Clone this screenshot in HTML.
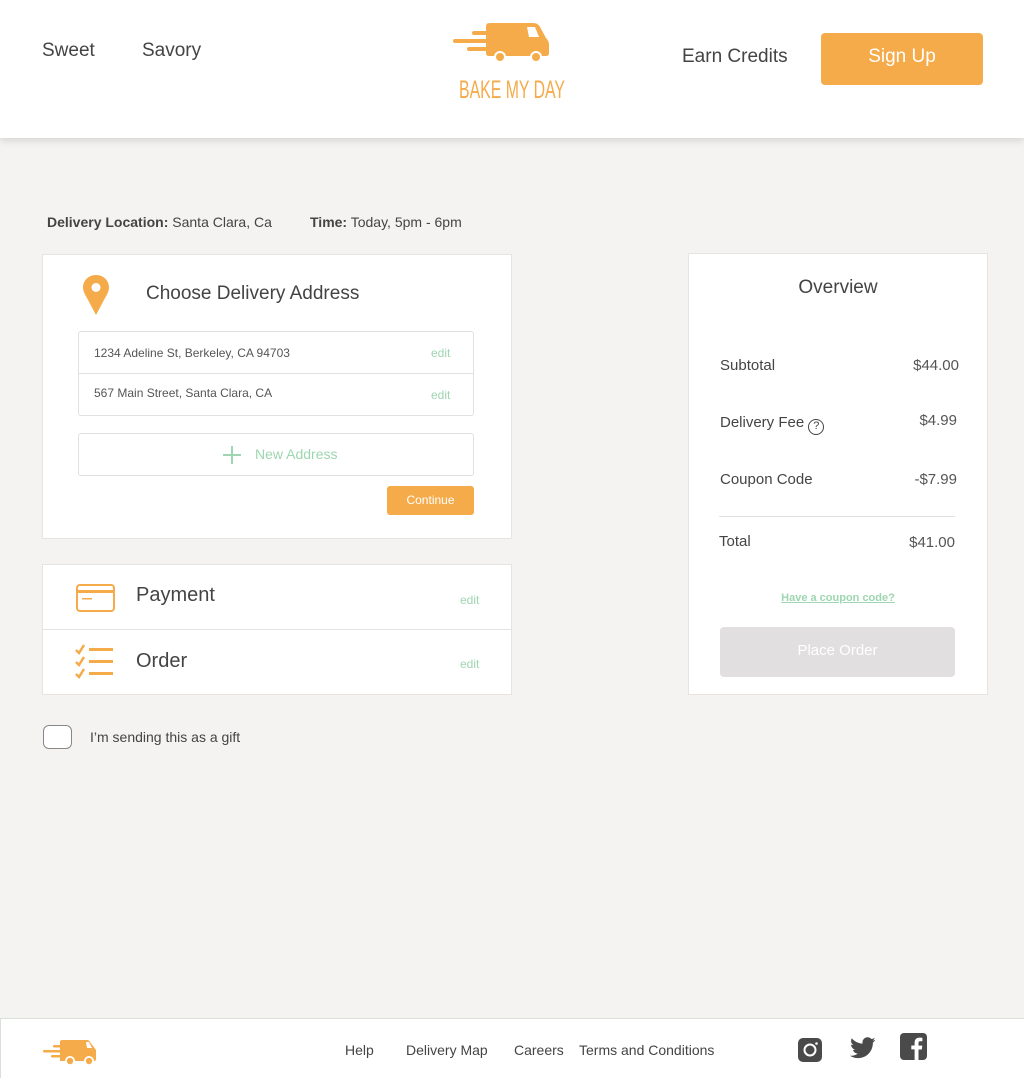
<!DOCTYPE html>
<html><head><meta charset="utf-8"><style>
*{margin:0;padding:0;box-sizing:border-box}
body{width:1024px;height:1078px;background:#f4f3f1;font-family:"Liberation Sans",sans-serif;color:#444;position:relative;overflow:hidden}
.a{position:absolute}
.hdr{left:0;top:0;width:1024px;height:138px;background:#fff;box-shadow:0 2px 8px rgba(0,0,0,.15)}
.card{background:#fff;border:1px solid #e6e3e1}
.edit{color:#9dd6b0;font-size:12px}
.row{font-size:15px;color:#444}
</style></head><body>
<div class="a hdr">
<div class="a" style="left:42px;top:40px;font-size:19px">Sweet</div>
<div class="a" style="left:142px;top:40px;font-size:19px">Savory</div>
<svg class="a" style="left:440px;top:10px" width="140" height="100" viewBox="440 10 140 100">
<g fill="#f5ab4a">
<rect x="472" y="31" width="18" height="4" rx="2"/><rect x="453" y="39" width="37" height="4" rx="2"/><rect x="467" y="47" width="23" height="4" rx="2"/>
<path d="M490 23 H533 Q538 23 540 27 L546 38 Q549 41 549 45 V53 Q549 56 546 56 H489 Q486 56 486 53 V26 Q486 23 490 23Z"/>
<circle cx="500" cy="57" r="6" fill="#fff"/><circle cx="500" cy="57" r="4"/>
<circle cx="536" cy="57" r="6" fill="#fff"/><circle cx="536" cy="57" r="4"/>
</g>
<path d="M527 27 H535 L539 37 H529Z" fill="#fff"/>
<text x="512" y="98" text-anchor="middle" fill="#f5ab4a" font-family="Liberation Sans Narrow,Liberation Sans,sans-serif" font-size="25" textLength="106" lengthAdjust="spacingAndGlyphs">BAKE MY DAY</text>
</svg>
<div class="a" style="left:682px;top:46px;font-size:19px">Earn Credits</div>
<div class="a" style="left:821px;top:33px;width:162px;height:52px;background:#f5ab4a;border-radius:4px;color:#fff;font-size:19px;text-align:center;line-height:48px">Sign Up</div>
</div>

<div class="a" style="left:47px;top:214px;font-size:14px"><b>Delivery Location:</b> Santa Clara, Ca</div>
<div class="a" style="left:310px;top:214px;font-size:14px"><b>Time:</b> Today, 5pm - 6pm</div>

<div class="a card" style="left:42px;top:254px;width:470px;height:285px">
<svg class="a" style="left:39px;top:19px" width="28" height="42" viewBox="0 0 28 42"><path d="M14 1C6.5 1 1 6.5 1 13.5 1 18 4 22 6 26L14 41 22 26C24 22 27 18 27 13.5 27 6.5 21.5 1 14 1Z" fill="#f5ab4a"/><circle cx="14" cy="13.5" r="4.5" fill="#fff"/></svg>
<div class="a" style="left:103px;top:28px;font-size:19px">Choose Delivery Address</div>
<div class="a" style="left:35px;top:76px;width:396px;height:85px;border:1px solid #e3e0de;border-radius:3px">
<div class="a" style="left:0;top:41px;width:394px;height:1px;background:#e3e0de"></div>
<div class="a" style="left:15px;top:14px;font-size:12px;color:#555">1234 Adeline St, Berkeley, CA 94703</div>
<div class="a edit" style="left:352px;top:14px">edit</div>
<div class="a" style="left:15px;top:54px;font-size:12px;color:#555">567 Main Street, Santa Clara, CA</div>
<div class="a edit" style="left:352px;top:56px">edit</div>
</div>
<div class="a" style="left:35px;top:178px;width:396px;height:43px;border:1px solid #e3e0de;border-radius:3px">
<svg class="a" style="left:143px;top:11px" width="20" height="20"><path d="M10 1V19M1 10H19" stroke="#9dd6b0" stroke-width="2"/></svg>
<div class="a" style="left:176px;top:12px;font-size:14px;color:#9dd6b0">New Address</div>
</div>
<div class="a" style="left:344px;top:231px;width:87px;height:29px;background:#f5ab4a;border-radius:3px;color:#fff;font-size:12px;text-align:center;line-height:29px">Continue</div>
</div>

<div class="a card" style="left:42px;top:564px;width:470px;height:131px">
<div class="a" style="left:0;top:64px;width:468px;height:1px;background:#e6e3e1"></div>
<svg class="a" style="left:33px;top:19px" width="40" height="28"><rect x="1" y="1" width="37" height="26" rx="3" fill="none" stroke="#f5ab4a" stroke-width="2"/><rect x="1" y="6" width="37" height="3" fill="#f5ab4a"/><rect x="6" y="14" width="10" height="1.5" fill="#f5ab4a"/></svg>
<div class="a" style="left:93px;top:19px;font-size:20px">Payment</div>
<div class="a edit" style="left:417px;top:28px">edit</div>
<svg class="a" style="left:31px;top:78px" width="42" height="38"><g fill="none" stroke="#f5ab4a" stroke-width="2.5"><path d="M2 7l3 3 5-8M2 19l3 3 5-8M2 31l3 3 5-8"/></g><g fill="#f5ab4a"><rect x="15" y="5" width="24" height="3"/><rect x="15" y="17" width="24" height="3"/><rect x="15" y="29" width="24" height="3"/></g></svg>
<div class="a" style="left:93px;top:85px;font-size:20px">Order</div>
<div class="a edit" style="left:417px;top:92px">edit</div>
</div>

<div class="a" style="left:43px;top:725px;width:29px;height:24px;border:1px solid #888;border-radius:6px;background:#fff"></div>
<div class="a" style="left:90px;top:729px;font-size:14px">I’m sending this as a gift</div>

<div class="a card" style="left:688px;top:253px;width:300px;height:442px">
<div class="a" style="left:0;top:23px;width:298px;text-align:center;font-size:19px">Overview</div>
<div class="a row" style="left:31px;top:103px">Subtotal</div><div class="a row" style="right:28px;top:103px;color:#555">$44.00</div>
<div class="a row" style="left:31px;top:160px">Delivery Fee <span style="display:inline-block;width:16px;height:16px;border:1.5px solid #444;border-radius:50%;font-size:11px;text-align:center;line-height:13px;vertical-align:-2px">?</span></div><div class="a row" style="right:30px;top:158px;color:#555">$4.99</div>
<div class="a row" style="left:31px;top:217px">Coupon Code</div><div class="a row" style="right:30px;top:217px;color:#555">-$7.99</div>
<div class="a" style="left:30px;top:262px;width:236px;height:1px;background:#e3e0de"></div>
<div class="a row" style="left:30px;top:279px">Total</div><div class="a row" style="right:32px;top:280px;color:#555">$41.00</div>
<div class="a" style="left:0;top:338px;width:298px;text-align:center;font-size:11px;font-weight:bold;color:#9dd6b0;text-decoration:underline">Have a coupon code?</div>
<div class="a" style="left:31px;top:373px;width:235px;height:50px;background:#e1dfe0;border-radius:4px;color:#fff;font-size:15px;text-align:center;line-height:48px">Place Order</div>
</div>

<div class="a" style="left:0;top:1018px;width:1024px;height:60px;background:#fff;border-top:1px solid #d8e0dc;border-left:1px solid #d8e0dc">
<svg class="a" style="left:40px;top:18px" width="60" height="36" viewBox="40 1036 60 36"><g fill="#f5ab4a"><rect x="52" y="1044" width="8" height="2.5" rx="1"/><rect x="42" y="1049" width="18" height="2.5" rx="1"/><rect x="50" y="1054" width="10" height="2.5" rx="1"/><path d="M61 1039H86Q88 1039 89 1041L95 1049V1058Q95 1060 93 1060H59V1041Q59 1039 61 1039Z"/><circle cx="69" cy="1060" r="5" fill="#fff"/><circle cx="69" cy="1060" r="3.2"/><circle cx="88" cy="1060" r="5" fill="#fff"/><circle cx="88" cy="1060" r="3.2"/></g><path d="M85 1041H88L91 1047H86Z" fill="#fff"/></svg>
<div class="a" style="left:344px;top:23px;font-size:14px">Help</div>
<div class="a" style="left:405px;top:23px;font-size:14px">Delivery Map</div>
<div class="a" style="left:513px;top:23px;font-size:14px">Careers</div>
<div class="a" style="left:578px;top:23px;font-size:14px">Terms and Conditions</div>
<svg class="a" style="left:796px;top:18px" width="26" height="26"><rect x="1" y="1" width="24" height="24" rx="5" fill="#4a4a4a"/><circle cx="13" cy="13" r="5.5" fill="none" stroke="#fff" stroke-width="2"/><circle cx="19.5" cy="6.5" r="1.3" fill="#fff"/></svg>
<svg class="a" style="left:849px;top:18px" width="26" height="22" viewBox="0 0 24 20"><path d="M23.6 2.4c-.9.4-1.8.6-2.8.8 1-.6 1.8-1.6 2.1-2.7-.9.6-2 1-3.1 1.2C18.9.7 17.6.1 16.3.1c-2.7 0-4.8 2.2-4.8 4.8 0 .4 0 .8.1 1.1C7.5 5.8 4 3.9 1.6 1 1.2 1.7 1 2.5 1 3.4c0 1.700.9 3.2 2.2 4-.8 0-1.5-.2-2.2-.6 0 2.4 1.7 4.4 3.9 4.8-.4.1-.8.2-1.300.2-.3 0-.6 0-.9-.1.6 1.9 2.4 3.4 4.5 3.4-1.7 1.3-3.7 2.1-6 2.1-.4 0-.8 0-1.2-.1 2.1 1.4 4.7 2.2 7.4 2.2 8.9 0 13.7-7.4 13.7-13.7v-.6c.9-.7 1.7-1.5 2.3-2.5z" fill="#4a4a4a"/></svg>
<svg class="a" style="left:899px;top:14px" width="27" height="27"><rect x="0" y="0" width="27" height="27" rx="4" fill="#4a4a4a"/><path d="M18.5 27V16.5h3.3l.5-3.9h-3.8V10.2c0-1.1.3-1.9 1.9-1.9h2V4.8c-.4 0-1.6-.2-2.9-.2-2.9 0-4.9 1.8-4.9 5v2.900h-3.3v3.9h3.3V27z" fill="#fff"/></svg>
</div>
</body></html>
